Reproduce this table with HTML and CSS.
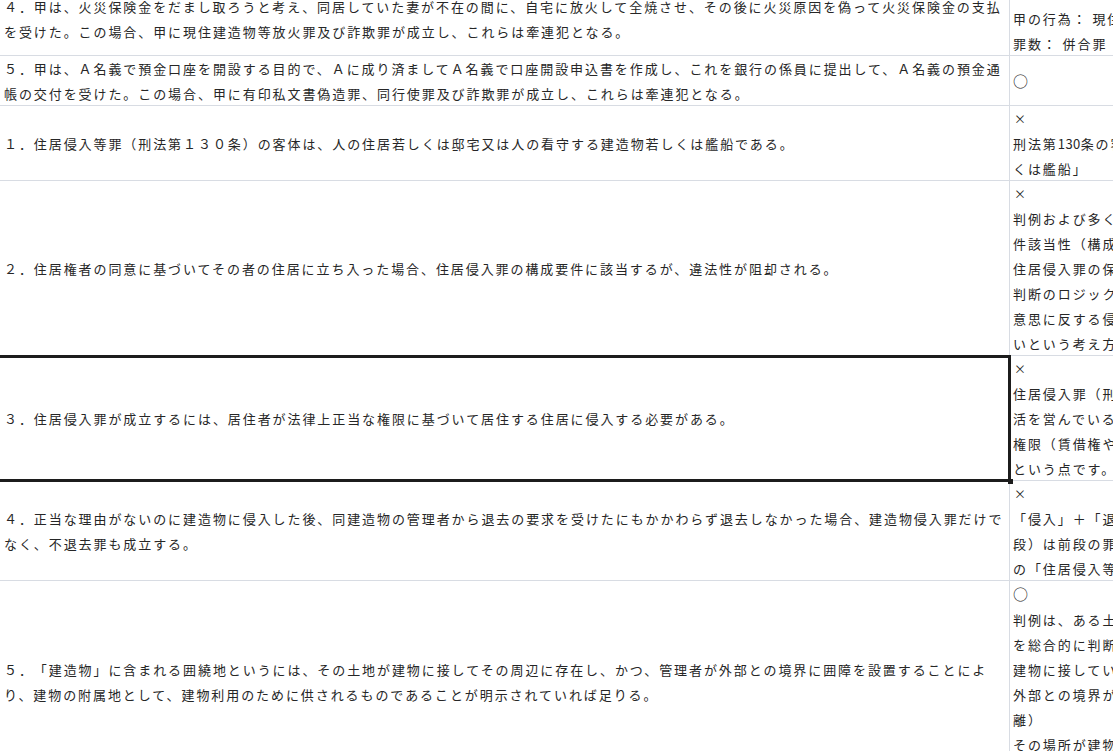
FILE: index.html
```html
<!DOCTYPE html>
<html lang="ja">
<head>
<meta charset="utf-8">
<title>刑法 一問一答</title>
<link rel="stylesheet" href="styles.css">
</head>
<body>
<div class="sheet">
  <div class="cell q"><div class="txt">４．甲は、火災保険金をだまし取ろうと考え、同居していた妻が不在の間に、自宅に放火して全焼させ、その後に火災原因を偽って火災保険金の支払を受けた。この場合、甲に現住建造物等放火罪及び詐欺罪が成立し、これらは牽連犯となる。</div></div>
  <div class="cell a"><div class="txt"><span class="mark">×</span><br>甲の行為： 現住建造物等放火罪と詐欺罪<br>罪数： 併合罪</div></div>

  <div class="cell q"><div class="txt">５．甲は、Ａ名義で預金口座を開設する目的で、Ａに成り済ましてＡ名義で口座開設申込書を作成し、これを銀行の係員に提出して、Ａ名義の預金通帳の交付を受けた。この場合、甲に有印私文書偽造罪、同行使罪及び詐欺罪が成立し、これらは牽連犯となる。</div></div>
  <div class="cell a"><div class="txt"><span class="circle">○</span></div></div>

  <div class="cell q"><div class="txt">１．住居侵入等罪（刑法第１３０条）の客体は、人の住居若しくは邸宅又は人の看守する建造物若しくは艦船である。</div></div>
  <div class="cell a"><div class="txt"><span class="mark">×</span><br>刑法第<span class="num">130</span>条の客体は「人の住居若しくは人の看守する邸宅、建造物若し<br>くは艦船」</div></div>

  <div class="cell q"><div class="txt">２．住居権者の同意に基づいてその者の住居に立ち入った場合、住居侵入罪の構成要件に該当するが、違法性が阻却される。</div></div>
  <div class="cell a"><div class="txt"><span class="mark">×</span><br>判例および多くの学説は、住居権者の同意がある場合には構成要<br>件該当性（構成要件的行為である「侵入」）そのものが否定されると解しています。<br>住居侵入罪の保護法益を住居権（誰を立ち入らせるかの自由）と捉えると、<br>判断のロジックとしては、「侵入」とは住居権者の<br>意思に反する侵入を意味するため、同意があれば「侵入」にあたらな<br>いという考え方です。</div></div>

  <div class="cell q selected"><div class="txt">３．住居侵入罪が成立するには、居住者が法律上正当な権限に基づいて居住する住居に侵入する必要がある。</div></div>
  <div class="cell a"><div class="txt"><span class="mark">×</span><br>住居侵入罪（刑法第<span class="num">130</span>条）の客体である「住居」とは、人が起臥寝食など日常生<br>活を営んでいる場所を指し、居住者がその場所に居住する正当な<br>権限（賃借権や所有権など）を有しているかどうかは問わない<br>という点です。</div></div>

  <div class="cell q"><div class="txt">４．正当な理由がないのに建造物に侵入した後、同建造物の管理者から退去の要求を受けたにもかかわらず退去しなかった場合、建造物侵入罪だけでなく、不退去罪も成立する。</div></div>
  <div class="cell a"><div class="txt"><span class="mark">×</span><br>「侵入」＋「退去しない」という場合、不退去罪（刑法第<span class="num">130</span>条後<br>段）は前段の罪が成立しない場合に補充的に成立するため、前段<br>の「住居侵入等罪」のみが成立します。</div></div>

  <div class="cell q"><div class="txt">５．「建造物」に含まれる囲繞地というには、その土地が建物に接してその周辺に存在し、かつ、管理者が外部との境界に囲障を設置することにより、建物の附属地として、建物利用のために供されるものであることが明示されていれば足りる。</div></div>
  <div class="cell a"><div class="txt"><span class="circle">○</span><br>判例は、ある土地が囲繞地に当たるかどうかについて、次の要素<br>を総合的に判断しています。<br>建物に接していること（近接性）<br>外部との境界が囲障で区画されていること（外部からの隔<br>離）<br>その場所が建物の附属地として建物利用のために供されることが<br>明示されていること</div></div>
</div>
</body>
</html>
```

FILE: styles.css
```css
:root {
  --grid: #d8dce3;
  --ink: #262626;
}

html,
body {
  margin: 0;
  padding: 0;
  background: #ffffff;
  overflow: hidden;
}

body {
  width: 1113px;
  height: 751px;
  font-family: "Noto Sans CJK JP", "Noto Sans", sans-serif;
  font-size: 13px;
  letter-spacing: 1.92px;
  color: var(--ink);
  text-spacing-trim: space-all;
}

.sheet {
  display: grid;
  grid-template-columns: 1010px 420px;
  margin-top: -19px;
}

.cell {
  display: flex;
  align-items: center;
  line-height: 25px;
  box-shadow: inset 0 -1px 0 var(--grid);
}

.q {
  padding: 0 4px 0 4px;
  box-shadow: inset -1px -1px 0 var(--grid);
}

.a {
  padding-left: 3px;
  white-space: nowrap;
  overflow: hidden;
}

.mark {
  font-size: 12px;
  letter-spacing: 0;
  padding-left: 1px;
}

.circle {
  font-size: 15px;
  letter-spacing: 0;
}

.num {
  letter-spacing: 0.4px;
}

.selected {
  position: relative;
}

.selected::after {
  content: "";
  position: absolute;
  top: -1px;
  bottom: -1px;
  left: -4px;
  right: -1px;
  border: 3px solid #1c1c1c;
  pointer-events: none;
}

.selected::before {
  content: "";
  position: absolute;
  right: -3px;
  bottom: -3px;
  width: 5px;
  height: 5px;
  background: #1c1c1c;
  z-index: 1;
}
```
